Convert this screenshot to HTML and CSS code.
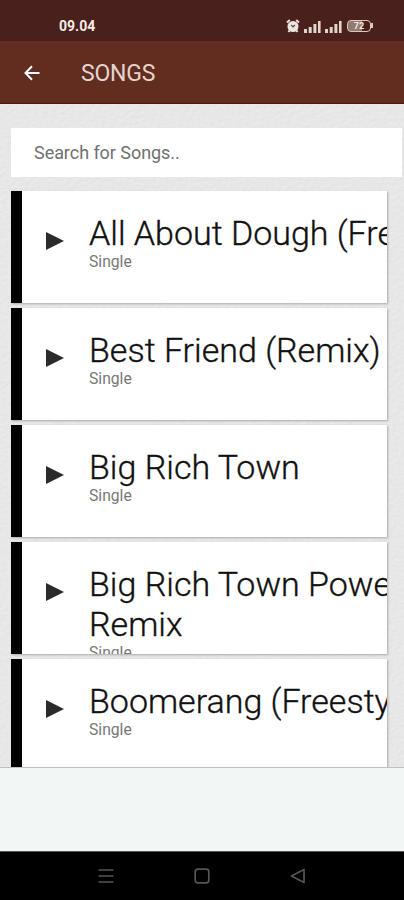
FILE: index.html
```html
<!DOCTYPE html>
<html lang="en">
<head>
<meta charset="utf-8">
<title>Songs</title>
<link rel="stylesheet" href="styles.css">
</head>
<body>
<div class="phone">
  <header class="status">
    <span class="clock">09.04</span>
    <div class="indicators">
      <svg class="alarm" width="14" height="14" viewBox="0 0 14 14"><circle cx="7" cy="7.5" r="5.5" fill="#eee4df"/><path d="M1 3.6 3.8 1.1M13 3.6 10.2 1.1M3.5 11.5 2.5 13M10.5 11.5l1 1.5" stroke="#eee4df" stroke-width="2"/><path d="M5.2 6 7 7.8 9 6" fill="none" stroke="#6b473f" stroke-width="1.2"/></svg>
      <svg class="signal" width="17" height="13" viewBox="0 0 17 13"><path d="M0 9h3v4H0zM4.7 7h3v6h-3zM9.4 4h3v9h-3zM14 1h2.6v12H14z" fill="#e2d3cb"/></svg>
      <svg class="signal" width="17" height="13" viewBox="0 0 17 13"><path d="M0 9h3v4H0zM4.7 7h3v6h-3zM9.4 4h3v9h-3zM14 1h2.6v12H14z" fill="#e2d3cb"/></svg>
      <div class="battery"><span>72</span></div>
    </div>
  </header>
  <nav class="appbar">
    <svg class="back" width="16" height="16" viewBox="0 0 16 16"><path d="M15.5 8H1.5M8 1.3 1.5 8 8 14.7" fill="none" stroke="#fff" stroke-width="2"/></svg>
    <h1>SONGS</h1>
  </nav>
  <main class="content">
    <svg class="paper" width="404" height="664"><filter id="grain" x="0" y="0" width="100%" height="100%"><feTurbulence type="fractalNoise" baseFrequency="0.22 0.3" numOctaves="3" seed="4" result="n"/><feDiffuseLighting in="n" lighting-color="#e7e7e7" surfaceScale="0.2" diffuseConstant="1.13"><feDistantLight azimuth="235" elevation="62"/></feDiffuseLighting></filter><rect width="404" height="664" filter="url(#grain)"/></svg>
    <div class="search">Search for Songs..</div>
    <ul class="songs">
      <li class="song"><svg class="play" width="18" height="18" viewBox="0 0 18 18"><path d="M0 0 18 9 0 18z"/></svg><div class="info"><h2>All About Dough (Freestyle)</h2><p>Single</p></div></li>
      <li class="song"><svg class="play" width="18" height="18" viewBox="0 0 18 18"><path d="M0 0 18 9 0 18z"/></svg><div class="info"><h2>Best Friend (Remix)</h2><p>Single</p></div></li>
      <li class="song"><svg class="play" width="18" height="18" viewBox="0 0 18 18"><path d="M0 0 18 9 0 18z"/></svg><div class="info"><h2>Big Rich Town</h2><p>Single</p></div></li>
      <li class="song"><svg class="play" width="18" height="18" viewBox="0 0 18 18"><path d="M0 0 18 9 0 18z"/></svg><div class="info"><h2>Big Rich Town Power<br>Remix</h2><p>Single</p></div></li>
      <li class="song"><svg class="play" width="18" height="18" viewBox="0 0 18 18"><path d="M0 0 18 9 0 18z"/></svg><div class="info"><h2>Boomerang (Freestyle)</h2><p>Single</p></div></li>
    </ul>
  </main>
  <div class="banner"></div>
  <footer class="navkeys">
    <svg width="16" height="16" viewBox="0 0 16 16"><path d="M.5 2h15M.5 8h15M.5 14h15"/></svg>
    <svg width="16" height="16" viewBox="0 0 16 16"><rect x="1.2" y="1.2" width="13.6" height="13.6" rx="2.5"/></svg>
    <svg width="16" height="16" viewBox="0 0 16 16"><path d="M14 1.5v13L1.5 8z" stroke-linejoin="round"/></svg>
  </footer>
</div>
</body>
</html>
```
FILE: styles.css
```css
* { box-sizing: border-box; margin: 0; padding: 0; }
body { font-family: Roboto, "Liberation Sans", sans-serif; background: #000; }
svg { display: block; flex: none; }
.phone { width: 404px; height: 900px; display: flex; flex-direction: column; overflow: hidden; }
.status { height: 41px; flex: none; background: #49201b; display: flex; justify-content: space-between; padding: 19px 33px 0 59px; color: #f4ece8; }
.clock { margin-top: -1px; font-size: 14px; line-height: 16px; font-weight: 700; }
.indicators { display: flex; height: 14px; align-items: center; }
.signal { margin-left: 4px; }
.battery { position: relative; width: 24px; height: 12px; margin-left: 5px; border: 1.5px solid #d9c9c1; border-radius: 4px; background: linear-gradient(90deg, #94796f 65%, transparent 65%); font-size: 9px; line-height: 10px; font-weight: 700; text-align: center; }
.battery::after { content: ""; position: absolute; right: -3px; top: 2px; width: 2px; height: 5px; background: #d9c9c1; }
.appbar { height: 63px; flex: none; background: #622c1f; border-bottom: 1px solid #551410; display: flex; align-items: center; padding: 2px 24px 0; }
.appbar h1 { margin: 2px 0 0 41px; font-size: 23px; line-height: 28px; font-weight: 400; letter-spacing: -.2px; color: #e5d5d0; }
.content { position: relative; height: 664px; flex: none; overflow: hidden; padding: 24px 0 0 11px; background: #e4e4e4; border-bottom: 1px solid #bdc1c0; }
.paper { position: absolute; left: 0; top: 0; }
.search { position: relative; width: 391px; height: 49px; padding-left: 23px; background: #fff; font-size: 18px; line-height: 49px; letter-spacing: -.05px; color: #707070; }
.songs { position: relative; list-style: none; margin-top: 14px; display: flex; flex-direction: column; gap: 5px; }
.song { width: 376px; height: 112px; flex: none; display: flex; overflow: hidden; background: #fff; border-left: 11px solid #000; box-shadow: 1px 1px 2px #aaa; padding-left: 24px; }
.play { margin-top: 41px; fill: #2b2b2b; }
.info { margin: 22px 0 0 25px; white-space: nowrap; }
.info h2 { font-size: 34px; line-height: 40px; font-weight: 300; color: #111; -webkit-text-stroke: .35px #111; }
.info p { font-size: 15.7px; line-height: 17px; color: #777; }
.banner { height: 83px; flex: none; background: #f2f7f6; }
.navkeys { flex: 1; display: flex; justify-content: center; align-items: center; gap: 80px; padding: 0 0 1px; border-top: 1px solid #555; background: #000; }
.navkeys svg { fill: none; stroke: #555; stroke-width: 1.7; }
```
